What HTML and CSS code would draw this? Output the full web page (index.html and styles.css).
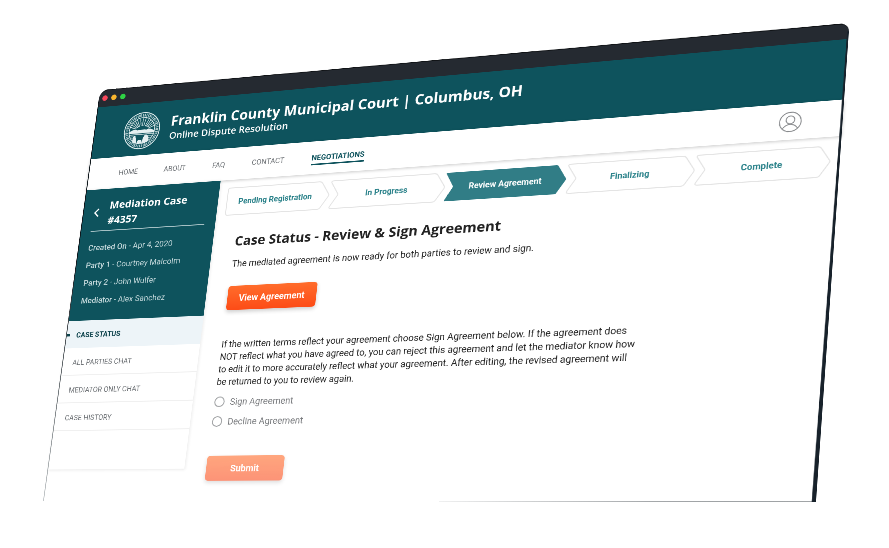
FILE: index.html
```html
<!DOCTYPE html>
<html lang="en">
<head>
<meta charset="utf-8">
<title>Franklin County Municipal Court | Online Dispute Resolution</title>
<link rel="stylesheet" href="styles.css">
</head>
<body>
<div class="stage">
  <div class="window">
    <div class="titlebar">
      <span class="light light-red"></span>
      <span class="light light-yellow"></span>
      <span class="light light-green"></span>
    </div>

    <header class="header">
      <svg class="seal" viewBox="0 0 80 80" aria-hidden="true">
        <g fill="none" stroke="#e4eff0">
          <circle cx="40" cy="40" r="38.5" stroke-width="2"/>
          <circle cx="40" cy="40" r="33" stroke-width="6" stroke-dasharray="2 1.6 3 1.4 1.6 2.2" opacity=".75"/>
          <circle cx="40" cy="40" r="28" stroke-width="1.6"/>
          <path stroke-width="1.4" d="M40 30V14M34 31L27 16M46 31L53 16M30 33L19 22M50 33L61 22M27 36L14 31M53 36L66 31M37 30L34 14M43 30L46 14M32 32L23 19M48 32L57 19M28 34L16 26M52 34L64 26"/>
          <path stroke-width="1.4" d="M14 45h52M13 48h54"/>
          <path stroke-width="1.2" d="M15 52h14M50 52h16M17 56h10M20 60h8M52 56h10M51 60h9"/>
        </g>
        <path fill="#e4eff0" d="M12 42c8-5 13-6 19-3 6-4 12-4 18 0 6-3 12-2 19 3v3H12z"/>
        <path fill="#e4eff0" d="M23 66c-2-6-2-11 2-16 5 4 5 10 6 17zM44 67c-1-6 0-11 3-16 2-2 5-2 7 0 4 4 4 9 1 14zM34 60h7l3 7H31z"/>
        <path fill="#0e535d" d="M33 38a7 6 0 0 1 14 0z"/>
      </svg>
      <div class="brand">
        <p class="brand-name">Franklin County Municipal Court | Columbus, OH</p>
        <p class="brand-sub">Online Dispute Resolution</p>
      </div>
    </header>

    <nav class="nav">
      <a class="nav-link" href="#">HOME</a>
      <a class="nav-link" href="#">ABOUT</a>
      <a class="nav-link" href="#">FAQ</a>
      <a class="nav-link" href="#">CONTACT</a>
      <a class="nav-link nav-link-current" href="#">NEGOTIATIONS</a>
      <a class="account" href="#" aria-label="Account">
        <svg class="account-icon" viewBox="0 0 40 40" aria-hidden="true">
          <g fill="none" stroke="#85878a" stroke-width="1.8">
            <circle cx="20" cy="20" r="18.8"/>
            <circle cx="20" cy="16" r="7.6"/>
            <path d="M6.5 33C10 27.500 14.500 24.800 20 24.800S30 27.500 33.500 33"/>
          </g>
        </svg>
      </a>
    </nav>

    <div class="body">
      <aside class="sidebar">
        <section class="case">
          <div class="case-head">
            <a class="back" href="#" aria-label="Back">
              <svg class="back-icon" viewBox="0 0 12 20" aria-hidden="true"><path d="M10 2L2 10l8 8" fill="none" stroke="#fff" stroke-width="3"/></svg>
            </a>
            <h2 class="case-title">Mediation Case #4357</h2>
          </div>
          <p class="fact"><b>Created On</b> - Apr 4, 2020</p>
          <p class="fact"><b>Party 1</b> - Courtney Malcolm</p>
          <p class="fact"><b>Party 2</b> - John Wulfer</p>
          <p class="fact"><b>Mediator</b> - Alex Sanchez</p>
        </section>
        <a class="side-link side-link-current" href="#">CASE STATUS</a>
        <a class="side-link" href="#">ALL PARTIES CHAT</a>
        <a class="side-link" href="#">MEDIATOR ONLY CHAT</a>
        <a class="side-link" href="#">CASE HISTORY</a>
        <div class="side-rest"></div>
      </aside>

      <main class="content">
        <ol class="steps">
          <li class="step step-first">
            <svg class="step-shape" viewBox="0 0 210 58" preserveAspectRatio="none" aria-hidden="true"><path d="M5 1H188Q192 1 194 4L208 26Q210 29 208 32L194 54Q192 57 188 57H5Q1 57 1 53V5Q1 1 5 1Z"/></svg>
            <span class="step-label">Pending Registration</span>
          </li>
          <li class="step">
            <svg class="step-shape" viewBox="0 0 225 58" preserveAspectRatio="none" aria-hidden="true"><path d="M6 1H203Q207 1 209 4L223 26Q225 29 223 32L209 54Q207 57 203 57H6Q0 57 3 52L16 31Q17 29 16 27L3 6Q0 1 6 1Z"/></svg>
            <span class="step-label">In Progress</span>
          </li>
          <li class="step step-current" aria-current="step">
            <svg class="step-shape" viewBox="0 0 225 58" preserveAspectRatio="none" aria-hidden="true"><path d="M4 1H206Q208 1 209 3L224 27Q225 29 224 31L209 55Q208 57 206 57H4Q0 57 2 54L16 29L2 4Q0 1 4 1Z"/></svg>
            <span class="step-label">Review Agreement</span>
          </li>
          <li class="step">
            <svg class="step-shape" viewBox="0 0 225 58" preserveAspectRatio="none" aria-hidden="true"><path d="M6 1H203Q207 1 209 4L223 26Q225 29 223 32L209 54Q207 57 203 57H6Q0 57 3 52L16 31Q17 29 16 27L3 6Q0 1 6 1Z"/></svg>
            <span class="step-label">Finalizing</span>
          </li>
          <li class="step">
            <svg class="step-shape" viewBox="0 0 225 58" preserveAspectRatio="none" aria-hidden="true"><path d="M6 1H203Q207 1 209 4L223 26Q225 29 223 32L209 54Q207 57 203 57H6Q0 57 3 52L16 31Q17 29 16 27L3 6Q0 1 6 1Z"/></svg>
            <span class="step-label">Complete</span>
          </li>
        </ol>

        <form class="agreement">
          <h1 class="heading">Case Status - Review &amp; Sign Agreement</h1>
          <p class="lead">The mediated agreement is now ready for both parties to review and sign.</p>
          <button class="button button-view" type="button">View Agreement</button>
          <p class="terms">If the written terms reflect your agreement choose Sign Agreement below. If the agreement does<br>NOT reflect what you have agreed to, you can reject this agreement and let the mediator know how<br>to edit it to more accurately reflect what your agreement. After editing, the revised agreement will<br>be returned to you to review again.</p>
          <label class="choice"><input class="radio" type="radio" name="decision" value="sign">Sign Agreement</label>
          <label class="choice"><input class="radio" type="radio" name="decision" value="decline">Decline Agreement</label>
          <button class="button button-submit" type="button">Submit</button>
        </form>
      </main>
    </div>
  </div>
</div>
</body>
</html>
```
FILE: styles.css
```css
* {
  box-sizing: border-box;
}

body {
  margin: 0;
  background: #fff;
  font-family: Roboto, "Liberation Sans", sans-serif;
  color: #222;
}

h1, h2, p, ol {
  margin: 0;
  padding: 0;
}

a {
  color: inherit;
  text-decoration: none;
}

.stage {
  height: 100vh;
  overflow: hidden;
}

/* The whole browser window is tilted in perspective as one sheet. */
.window {
  position: relative;
  width: 162vw;
  transform-origin: 0 0;
  transform: matrix3d(
    0.432249, -0.0515785, 0, -0.000104078,
    -0.0677917, 0.454491, 0, -0.0000423218,
    0, 0, 1, 0,
    100, 90, 0, 1);
}

/* Edges of the device */
.window::before,
.window::after {
  content: "";
  position: absolute;
  z-index: 3;
  bottom: 0;
}

.window::before {
  left: 0;
  top: 24px;
  width: 2px;
  background: linear-gradient(#10181d 0%, #10181d 40%, #c4c8ca 100%);
}

.window::after {
  right: 0;
  top: 24px;
  width: 7px;
  background: #18222b;
  clip-path: polygon(4px 0, 100% 0, 100% 100%, 0 100%);
}

.titlebar {
  position: relative;
  display: flex;
  align-items: center;
  gap: 8px;
  height: 38px;
  padding-left: 8px;
}

.titlebar::before {
  content: "";
  position: absolute;
  z-index: -1;
  left: 0;
  right: 0;
  top: 0;
  height: 44px;
  background: #252a31;
  border-top: 2px solid #101316;
  border-radius: 20px 16px 0 0;
  transform: skewY(0.32deg);
  transform-origin: 0 0;
}

.light {
  width: 12px;
  height: 12px;
  border-radius: 50%;
}

.light-red { background: #f5475b; }
.light-yellow { background: #fbb62f; }
.light-green { background: #2fd345; }

.header {
  display: flex;
  align-items: center;
  gap: 22px;
  height: 112px;
  padding: 6px 67px 0;
  background: #0e535d;
  color: #fff;
  font-family: "Open Sans", "Noto Sans", sans-serif;
}

.seal {
  width: 80px;
  height: 80px;
}

.brand-name {
  font-size: 29px;
  font-weight: 700;
  line-height: 32px;
}

.brand-sub {
  font-size: 20px;
  font-weight: 600;
  line-height: 32px;
}

.nav {
  position: relative;
  z-index: 1;
  display: flex;
  align-items: center;
  gap: 56px;
  height: 67px;
  padding: 0 67px 0 68px;
  background: #fff;
  box-shadow: 0 2px 6px #0003;
  font-size: 15px;
  line-height: 20px;
  color: #6c7074;
}

.nav-link-current {
  margin-top: 6px;
  padding-bottom: 2px;
  border-bottom: 3px solid #0e535d;
  color: #0e535d;
  font-weight: 700;
}

.account {
  margin-left: auto;
  height: 38px;
}

.account-icon {
  display: block;
  width: 38px;
  height: 38px;
}

.body {
  display: grid;
  grid-template-columns: 293px 1fr;
  align-items: start;
  border-bottom: 1px solid #8a8d90;
  border-image: linear-gradient(90deg, transparent 50%, #6f7478) 1;
}

.sidebar {
  position: relative;
  z-index: 2;
  background: #fff;
  box-shadow: 2px 0 6px #00000014;
}

.case {
  height: 277px;
  padding: 18px 23px 0;
  background: #0e535d;
  color: #c6dadd;
  font-size: 17px;
}

.case-head {
  display: grid;
  grid-template-columns: 33px 1fr;
  align-items: center;
  padding: 0 0 6px 2px;
  margin-bottom: 16px;
  border-bottom: 2px solid #a4c0c4;
}

.back-icon {
  display: block;
  width: 12px;
  height: 20px;
}

.case-title {
  color: #fff;
  font-family: "Open Sans", "Noto Sans", sans-serif;
  font-size: 22px;
  font-weight: 700;
  line-height: 32px;
}

.fact {
  line-height: 37px;
}

.fact b {
  font-weight: 500;
}

.side-link {
  display: flex;
  align-items: center;
  height: 57px;
  padding-top: 4px;
  padding-left: 23px;
  border-bottom: 2px solid #f0f0f0;
  color: #6c7074;
  font-size: 15px;
}

.side-link-current {
  padding-left: 0;
  background: #edf4f8;
  border-bottom-color: #edf4f8;
  color: #0e434c;
  font-weight: 700;
}

.side-link-current::before {
  content: "";
  width: 9px;
  height: 5px;
  margin-right: 14px;
  background: #0e434c;
}

.side-rest {
  height: 80px;
  border-bottom: 2px solid #f2f2f2;
}

.content {
  padding: 16px 16px 39px 18px;
}

.steps {
  display: grid;
  grid-template-columns: 14fr repeat(4, 15fr);
  list-style: none;
}

.step {
  display: grid;
  align-items: center;
  height: 58px;
  color: #2b828a;
  font-size: 16px;
  font-weight: 700;
}

.step-shape,
.step-label {
  grid-area: 1 / 1;
}

.step-shape {
  width: 100%;
  height: 58px;
  overflow: visible;
  fill: #fff;
  stroke: #e4e4e4;
  stroke-width: 2;
}

.step-label {
  text-align: center;
}

.step-first .step-label {
  padding-right: 10px;
}

.step-current {
  color: #fff;
}

.step-current .step-shape {
  fill: #317d86;
  stroke: none;
}

.agreement {
  display: flex;
  flex-direction: column;
  align-items: flex-start;
  padding: 34px 27px 0;
}

.heading {
  padding-left: 1px;
  font-family: "Open Sans", "Noto Sans", sans-serif;
  font-size: 27px;
  font-weight: 700;
  line-height: 38px;
}

.lead {
  margin-top: 16px;
  padding-left: 1px;
  font-size: 18px;
  line-height: 24px;
}

.button {
  border: 0;
  border-radius: 6px;
  height: 49px;
  color: #fff;
  font-family: inherit;
  font-size: 18px;
  font-weight: 700;
}

.button-view {
  width: 181px;
  margin-top: 33px;
  background: linear-gradient(#ff6c2b, #fd4c17);
  box-shadow: 0 4px 8px #0003;
}

.terms {
  margin-top: 56px;
  margin-bottom: 8px;
  font-size: 18px;
  line-height: 25px;
}

.choice {
  display: flex;
  align-items: center;
  gap: 11px;
  height: 39px;
  color: #77797c;
  font-size: 18px;
}

.radio {
  appearance: none;
  width: 21px;
  height: 21px;
  margin: 0;
  border: 2px solid #a2a4a6;
  border-radius: 50%;
  background: #fff;
}

.button-submit {
  width: 156px;
  margin-top: 48px;
  background: linear-gradient(#ffa67e, #fc9377);
  box-shadow: 0 4px 8px #0002;
}
```
